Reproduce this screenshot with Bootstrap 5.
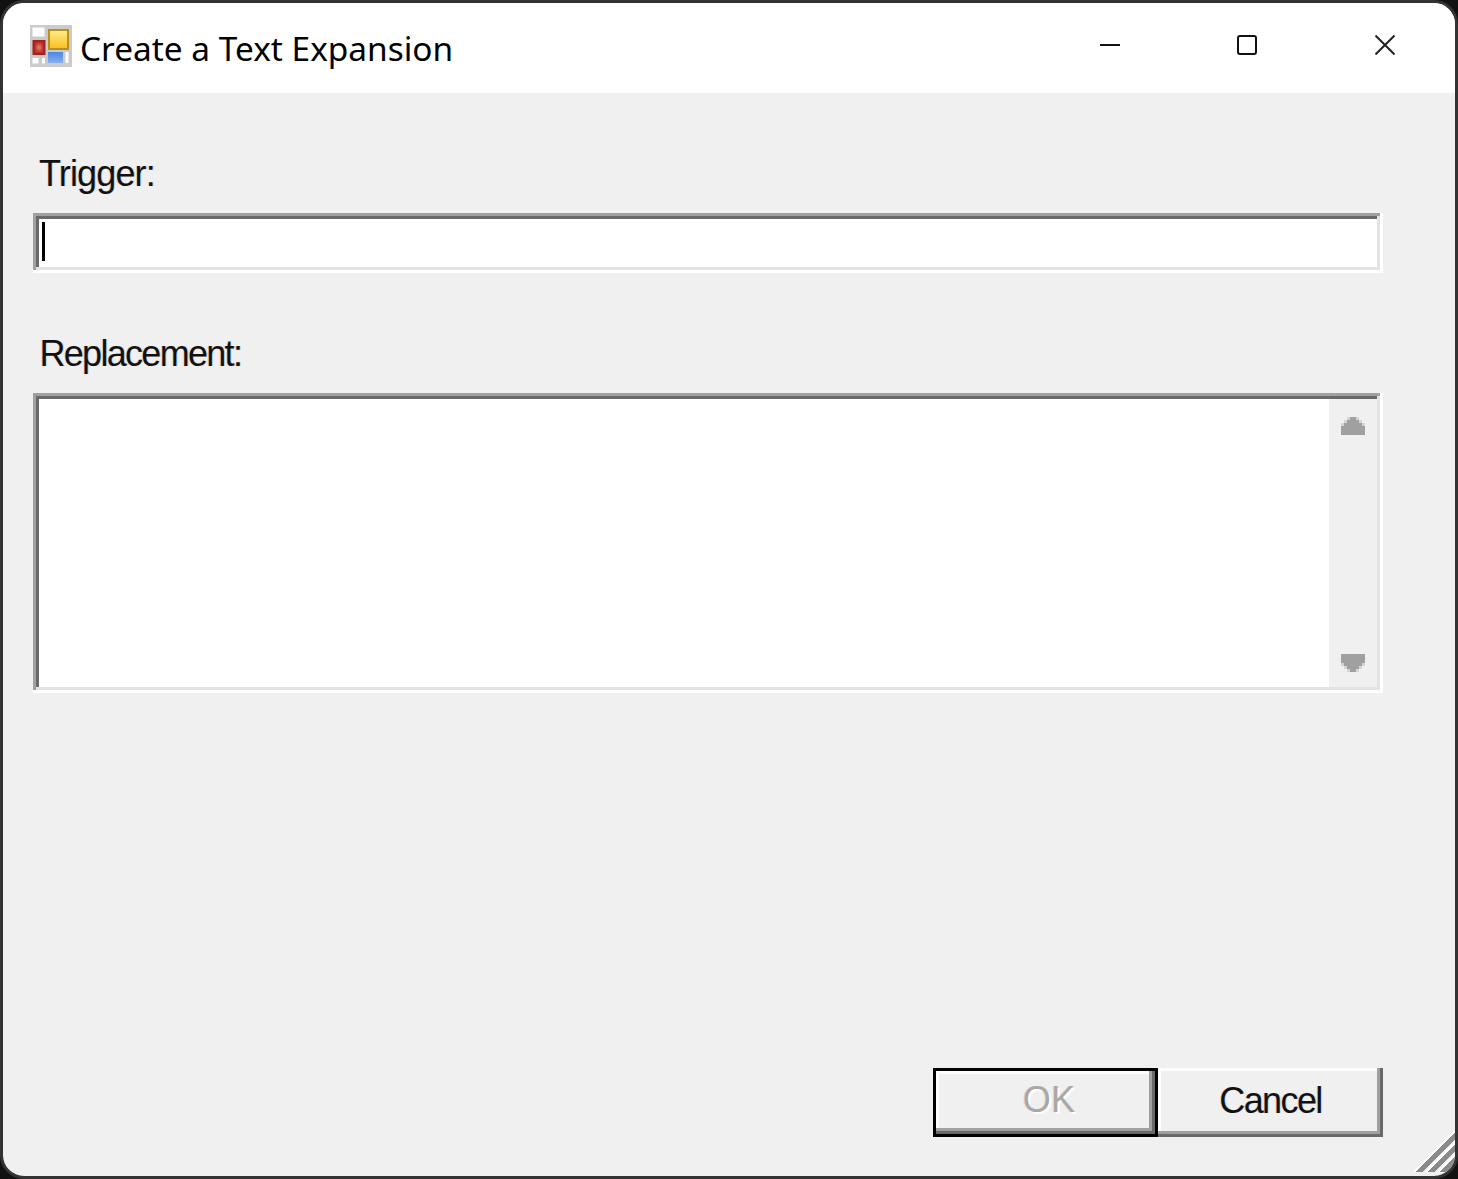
<!DOCTYPE html>
<html lang="en">
<head>
<meta charset="utf-8">
<title>Create a Text Expansion</title>
<link href="https://cdn.jsdelivr.net/npm/bootstrap@5.3.0/dist/css/bootstrap.min.css" rel="stylesheet">
<style>
html,body{margin:0;height:1179px;background:#111;overflow:hidden}
.win-frame{width:1458px;height:1179px;border:3px solid #333;border-radius:24px;background:#f0f0f0;overflow:hidden;position:relative}
.win-title{height:90px;background:#fff;padding-left:27px}
.win-title-text{font-family:"Noto Sans","Open Sans",sans-serif;font-size:33.4px;color:#000;margin-left:8px;line-height:1;position:relative;top:.5px}
.win-controls{width:413px;padding-right:1px;gap:1px}
.win-ctl{width:136px;height:90px;display:flex;align-items:center;justify-content:center;padding-bottom:6px}
.win-ctl-close{width:138px}
.dlg-body{padding-left:30px;height:1083px}
.dlg-label,.dlg-btn{font-family:"Liberation Sans",sans-serif;font-size:36px;text-shadow:-1px 0 rgba(233,169,107,.3),1px 0 rgba(80,160,240,.25)}
.dlg-label{color:#111;line-height:40px;margin:61px 0 19px;padding-left:6px}
.lbl-trigger{letter-spacing:-.85px}
.lbl-replace{letter-spacing:-1.7px;padding-left:6.500px}
.sunken{width:1350px;padding:3px;background:#fff;box-shadow:inset -3px -3px 0 #fff,inset 3px 3px 0 #a0a0a0}
.sunken-in{background:#fff;padding:3px;box-shadow:inset -3px -3px 0 #e3e3e3,inset 3px 3px 0 #696969}
.trigger-in{height:54px;padding:6px}
.caret-bar{width:3px;height:39px;background:#000}
.memo-in{height:294px;padding:3px 3px 3px 0}
.scroll-col{width:48px;background:#f0f0f0;padding:18px 0 15px}
.dlg-actions{padding:0 72px 39px 0}
.dlg-btn{line-height:1;width:225px;height:69px;background:#f0f0f0;padding:0 0 4px;border:0;box-shadow:inset -3px -3px 0 #696969,inset -6px -6px 0 #a0a0a0,inset 3px 3px 0 #fff;color:#111;border-radius:0;letter-spacing:-1.6px}
.dlg-btn.is-default{border:3px solid #000;box-shadow:inset -3px -3px 0 #696969,inset -6px -6px 0 #a0a0a0,inset 3px 3px 0 #fff;color:#a8a8a8;letter-spacing:.3px;padding:0 0 5px 7px;text-shadow:2px 2px 0 #fff,-1px 0 rgba(233,190,140,.4),1px 0 rgba(120,180,240,.3)}
.grip{position:absolute;right:0;bottom:0}
</style>
</head>
<body>
<div class="win-frame d-flex flex-column">
  <div class="win-title d-flex align-items-center flex-shrink-0">
    <svg width="42" height="42" viewBox="0 0 42 42" class="flex-shrink-0 mb-1">
      <defs>
        <linearGradient id="gy" x1="0" y1="0" x2="0" y2="1"><stop offset="0" stop-color="#ffe98a"/><stop offset="1" stop-color="#fcc020"/></linearGradient>
        <linearGradient id="gb" x1="0" y1="0" x2="0" y2="1"><stop offset="0" stop-color="#4f86e0"/><stop offset="1" stop-color="#86b0f0"/></linearGradient>
        <radialGradient id="gr"><stop offset="0" stop-color="#e08078"/><stop offset="1" stop-color="#b8302a"/></radialGradient>
        <filter id="soft" x="-5%" y="-5%" width="110%" height="110%"><feGaussianBlur stdDeviation=".6"/></filter>
      </defs>
      <g filter="url(#soft)">
        <rect width="42" height="42" fill="#cbcbcb"/>
        <rect x="2.500" y="2.500" width="12" height="9" fill="#fff"/>
        <rect x="2.500" y="33" width="6" height="5.500" fill="#fff"/>
        <rect x="12" y="33" width="3" height="5.500" fill="#fff"/>
        <rect x="35.500" y="27" width="3" height="11" fill="#fff"/>
        <rect x="18" y="4" width="21" height="21" fill="#b8901c"/>
        <rect x="20" y="6" width="17" height="17" fill="url(#gy)"/>
        <rect x="2.500" y="15" width="13" height="15" fill="#a3201a"/>
        <rect x="4.500" y="17" width="9" height="11" fill="url(#gr)"/>
        <rect x="18" y="27" width="15" height="11" fill="url(#gb)"/>
      </g>
    </svg>
    <span class="win-title-text flex-grow-1">Create a Text Expansion</span>
    <div class="win-controls d-flex flex-shrink-0">
      <div class="win-ctl"><svg width="20" height="20" viewBox="0 0 20 20"><path d="M0 10H20" stroke="#111" stroke-width="2" fill="none"/></svg></div>
      <div class="win-ctl"><svg width="20" height="20" viewBox="0 0 20 20"><rect x="1" y="1" width="18" height="18" rx="2" stroke="#111" stroke-width="2" fill="none"/></svg></div>
      <div class="win-ctl win-ctl-close"><svg width="20" height="20" viewBox="0 0 20 20"><path d="M.5 .5L19.500 19.500M19.500 .5L.5 19.500" stroke="#222" stroke-width="2" fill="none"/></svg></div>
    </div>
  </div>
  <div class="dlg-body d-flex flex-column">
    <p class="dlg-label lbl-trigger">Trigger:</p>
    <div class="sunken"><div class="sunken-in trigger-in"><div class="caret-bar"></div></div></div>
    <p class="dlg-label lbl-replace">Replacement:</p>
    <div class="sunken"><div class="sunken-in memo-in d-flex justify-content-end">
      <div class="scroll-col d-flex flex-column justify-content-between align-items-center">
        <svg width="24" height="18" viewBox="0 0 24 18" shape-rendering="crispEdges"><path d="M6 0H18V3H21V6H24V9H0V6H3V3H6Z" fill="#d4d4d4"/><path d="M9 0H15V3H18V6H21V9H24V18H0V9H3V6H6V3H9Z" fill="#a0a0a0"/></svg>
        <svg width="24" height="18" viewBox="0 0 24 18" shape-rendering="crispEdges"><path d="M0 9H24V12H21V15H18V18H6V15H3V12H0Z" fill="#d4d4d4"/><path d="M0 0H24V9H21V12H18V15H15V18H9V15H6V12H3V9H0Z" fill="#a0a0a0"/></svg>
      </div>
    </div></div>
    <div class="d-flex mt-auto justify-content-end dlg-actions">
      <button type="button" class="dlg-btn is-default">OK</button>
      <button type="button" class="dlg-btn">Cancel</button>
    </div>
  </div>
  <svg class="grip" width="45" height="45" viewBox="0 0 45 45">
    <defs><clipPath id="gc"><rect width="45" height="41"/></clipPath></defs>
    <g clip-path="url(#gc)" fill="none" shape-rendering="crispEdges">
      <path d="M-4 49L49 -4M8 49L49 8M20 49L49 20" stroke="#fff" stroke-width="2.500"/>
      <path d="M1 49L49 1M13 49L49 13M25 49L49 25" stroke="#8a8a8a" stroke-width="4.500"/>
    </g>
  </svg>
</div>
</body>
</html>
